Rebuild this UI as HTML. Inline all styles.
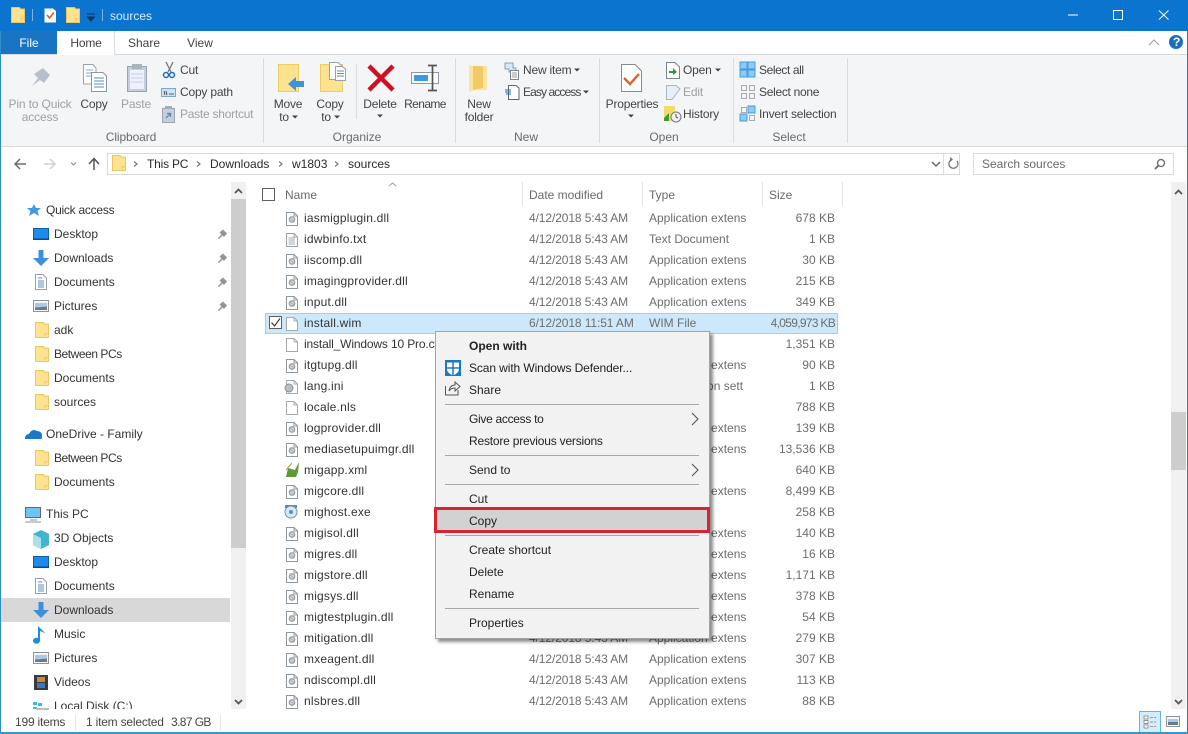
<!DOCTYPE html>
<html><head><meta charset="utf-8"><title>sources</title>
<style>
html,body{margin:0;padding:0;background:#fff}
#w{position:relative;width:1188px;height:734px;overflow:hidden;background:#fff;font:12px/16px "Liberation Sans",sans-serif;color:#2a2a2a}
#w div{position:absolute}
.t{white-space:nowrap}
.c{transform:translateX(-50%);text-align:center}
.g{color:#6a6a6a}
.dis{color:#a0a0a0;letter-spacing:-.15px}
.rb{color:#444;letter-spacing:-.2px}
.b{background:#dcdcdc}
.nv{left:54px;white-space:nowrap;color:#333}
.nh{left:46px;white-space:nowrap;color:#333}
.r{left:0;width:850px;height:21px}
.r span{position:absolute;top:2px;white-space:nowrap}
.n{left:304px;color:#333;letter-spacing:.2px}
.d{left:529px;color:#6d6d6d;letter-spacing:-.1px}
.y{left:649px;color:#6d6d6d}
.s{right:15px;color:#6d6d6d}
.m{left:33px;white-space:nowrap;color:#222}
.sp{left:9px;width:254px;height:1px;background:#a8a8a8}
svg{position:absolute;overflow:visible}
</style></head><body><div id="w">

<!-- title bar -->
<div style="left:0;top:0;width:1188px;height:31px;background:#0b74cf"></div>
<div style="left:0;top:31px;width:1188px;height:24px;background:#fff"></div>
<div style="left:0;top:31px;width:57px;height:23px;background:#1a74c4"></div>
<div style="left:57px;top:31px;width:57px;height:24px;background:#fff;border-right:1px solid #d9dadb"></div>
<div style="left:115px;top:54px;width:1073px;height:1px;background:#d9dadb"></div>
<div style="left:0;top:54px;width:57px;height:1px;background:#d9dadb"></div>
<!-- ribbon -->
<div style="left:0;top:55px;width:1188px;height:91px;background:#f4f5f6"></div>
<div style="left:0;top:146px;width:1188px;height:1px;background:#d9dadb"></div>
<div class="b" style="left:263px;top:58px;width:1px;height:85px"></div>
<div class="b" style="left:455px;top:58px;width:1px;height:85px"></div>
<div class="b" style="left:599px;top:58px;width:1px;height:85px"></div>
<div class="b" style="left:733px;top:58px;width:1px;height:85px"></div>
<div class="b" style="left:847px;top:58px;width:1px;height:85px"></div>
<div class="b" style="left:356px;top:64px;width:1px;height:55px"></div>

<!-- address -->
<div style="left:107px;top:153px;width:851px;height:20px;border:1px solid #d9d9d9"></div>
<div class="b" style="left:943px;top:154px;width:1px;height:20px"></div>
<div style="left:973px;top:153px;width:199px;height:20px;border:1px solid #d9d9d9"></div>

<!-- nav -->
<div style="left:1px;top:598px;width:229px;height:24px;background:#d8d8d8"></div>
<div style="left:231px;top:182px;width:15px;height:527px;background:#f0f0f0"></div>
<div style="left:231px;top:199px;width:15px;height:349px;background:#cdcdcd"></div>
<div style="left:1171px;top:182px;width:15px;height:527px;background:#f0f0f0"></div>
<div style="left:1171px;top:412px;width:15px;height:58px;background:#cdcdcd"></div>

<!-- selected row -->
<div style="left:265px;top:313px;width:571px;height:19px;background:#cde8fb;border:1px solid #9fd0f3"></div>
<!-- view buttons -->
<div style="left:1139px;top:711px;width:20px;height:21px;background:#d4ecfb;border:1px solid #5fb6ea"></div>
<!-- window edges -->
<div style="left:0;top:31px;width:1px;height:703px;background:#2c8fc7"></div>
<div style="left:1187px;top:31px;width:1px;height:703px;background:#2c7f9f"></div>
<div style="left:0;top:732px;width:1188px;height:2px;background:#3a96c8"></div>

<svg width="1188" height="734" style="left:0;top:0" viewBox="0 0 1188 734">
<defs>
<g id="fo"><path d="M.5.5H8.500L9.500 2H13.500V15.500H.5Z" fill="#fde28f" stroke="#e8c765"/><path d="M9.500 15V11H13" fill="#f3cf6a"/></g>
<g id="dl"><path d="M.5.5H8L11.500 4V13.500H.5Z" fill="#fff" stroke="#8f979e"/><path d="M8 .5V4H11.500" fill="none" stroke="#8f979e"/><circle cx="6" cy="7.500" r="2.600" fill="#dfe3e6" stroke="#9aa2a8" stroke-width="1.500"/><path d="M3.500 5L8.500 10" stroke="#a5acb2"/></g>
<g id="bl"><path d="M.5.5H8L11.500 4V13.500H.5Z" fill="#fff" stroke="#a4a9ae"/><path d="M8 .5V4H11.500" fill="none" stroke="#a4a9ae"/></g>
<g id="tx"><path d="M.5.5H8L11.500 4V13.500H.5Z" fill="#fff" stroke="#9aa0a6"/><path d="M8 .5V4H11.500M2.500 5H9M2.500 7H9M2.500 9H9M2.500 11H9" fill="none" stroke="#a5abb0"/></g>
<g id="pn"><path d="M2 10L5.500 6.500L3.500 4.500L7 1.500L11 5.500L8 9L6.500 7.500L3 11Z" fill="#8d949b"/></g>
<g id="dk"><rect x=".5" y=".5" width="15" height="11" fill="#1f8cec" stroke="#0e5fa9"/><rect x="0" y="10.500" width="16" height="1.500" fill="#0b4a86"/></g>
<g id="dn"><path d="M5.500 0H10.500V8H16L8 16L0 8H5.500Z" fill="#3d8fdd"/></g>
<g id="dc"><path d="M.5.5H8L11.500 4V15.500H.5Z" fill="#fff" stroke="#9aa0a6"/><path d="M3 4H7M3 7H9M3 9H9M3 11H9M3 13H9" stroke="#5b8fc0"/></g>
<g id="pc"><rect x=".5" y=".5" width="15" height="11" fill="#f4f6f8" stroke="#8d949b"/><path d="M2 3H14V6.500L2 7.500Z" fill="#a8c9e6"/><path d="M2 7.500L14 6.500V10H2Z" fill="#6d7a86"/></g>
</defs>

<!-- title icons -->
<use href="#fo" x="11" y="7"/><rect x="32" y="9" width="1" height="12" fill="#7fb6e6"/>
<path d="M44.500 8.500H53L56 11V22.500H44.500Z" fill="#fff"/><path d="M47 15L49.500 18L54 12.500" fill="none" stroke="#d9552b" stroke-width="1.500"/>
<use href="#fo" x="66" y="7"/>
<path d="M87 14H95M87.500 17H94.500L91 21Z" fill="#12345c" stroke="#12345c"/><rect x="102" y="9" width="1" height="12" fill="#7fb6e6"/>
<path d="M1068 15H1078M1113.500 10.500H1122.500V19.500H1113.500ZM1159 10.500L1168.500 19.500M1168.500 10.500L1159 19.500" fill="none" stroke="#fff" stroke-width="1"/>
<circle cx="1176" cy="42" r="7" fill="#1b6fb8"/>
<path d="M1149 45L1154 40L1159 45" fill="none" stroke="#9a9a9a"/>

<!-- clipboard -->
<path d="M32 86L38 78L34 74L43 68L50 75L44 83L40 80Z" fill="#b7c0ca"/>
<path d="M83.500 64.500H93L96 68V84H83.500Z" fill="#fff" stroke="#9aa3ab"/><path d="M86 70H93M86 73H93M86 76H93" stroke="#7ea8cc"/>
<path d="M91.500 72.500H103L106.500 76V91.500H91.500Z" fill="#fff" stroke="#8c96a0"/><path d="M94 78H104M94 81H104M94 84H104M94 87H104" stroke="#4f8ec7"/>
<rect x="127.500" y="66.500" width="19" height="25" fill="#c5cfdb" stroke="#98a3af"/><rect x="130" y="70" width="14" height="19" fill="#eef1fb"/><rect x="132" y="64" width="10" height="5" fill="#a9b3bf"/><path d="M131 74H143M131 78H143M131 82H143" stroke="#c5cdee"/>
<path d="M166 62L171 72M173 62L168 72" stroke="#777" stroke-width="1.300"/><circle cx="166" cy="75" r="2.500" fill="none" stroke="#1d6fb5" stroke-width="1.500"/><circle cx="172" cy="75" r="2.500" fill="none" stroke="#1d6fb5" stroke-width="1.500"/>
<rect x="161.500" y="88.500" width="14" height="8" fill="#cfe3f5" stroke="#7ba7cf"/><path d="M164 91L165 95M166 91L167 95M169 94H174" stroke="#333" stroke-width=".8"/>
<rect x="162.500" y="108.500" width="12" height="14" fill="#c3cfdb" stroke="#9aa5b1"/><rect x="165" y="106" width="7" height="3" fill="#a3aeba"/><path d="M166 118L170 114M167 113.500H170.500V117" fill="none" stroke="#4f86b8" stroke-width="1.200"/>
<!-- organize -->
<path d="M278.500 64.500H298.500V91.500H278.500Z" fill="#fde28f" stroke="#f0cd62"/><path d="M288 84L296 77V81H304V87H296V91Z" fill="#3f94d8"/>
<path d="M320.500 64.500H342.500V91.500H320.500Z" fill="#fde28f" stroke="#f0cd62"/><path d="M329.500 62.500H338L342 66V79.500H329.500Z" fill="#fff" stroke="#98a1aa"/><path d="M335.500 66.500H342L345.500 69V80.500H335.500Z" fill="#fff" stroke="#98a1aa"/><path d="M337 71H344M337 73.500H344M337 76H344" stroke="#4f8ec7"/>
<path d="M369 66L393 90M393 66L369 90" stroke="#cf1020" stroke-width="4.500"/>
<rect x="411.500" y="72.500" width="27" height="11" fill="#fff" stroke="#8b98a5"/><rect x="414" y="75" width="14" height="6" fill="#3b9ae0"/><path d="M428 65.500H437M428 90.500H437M432.500 66V90" stroke="#555" stroke-width="1.700"/>
<!-- new -->
<path d="M469 65.500L478 66H487V90H475L469 92Z" fill="#fce3a0"/><path d="M473 66H483V88L473 90Z" fill="#f3cb66"/>
<path d="M505 63H513V68H516V72H509V69H505Z" fill="#d6e7f6" stroke="#728aa0" stroke-width=".8"/><rect x="510.500" y="70.500" width="8" height="9" fill="#fff" stroke="#7d8790"/><path d="M512 73H517M512 75H517M512 77H517" stroke="#999"/>
<path d="M508.500 85.500H516L519 88V99.500H508.500Z" fill="#fff" stroke="#666"/><path d="M505 90H511M505 92H511M506 94H511" stroke="#1b6fb8"/>
<!-- open -->
<path d="M621.500 64.500H635L641.500 71V91.500H621.500Z" fill="#fff" stroke="#8a8a8a"/><path d="M624 78L630 84L639 74" fill="none" stroke="#d9652b" stroke-width="2.400"/>
<path d="M666.500 62.500H675L679.500 67V78.500H666.500Z" fill="#fff" stroke="#7b858e"/><path d="M669 71H673V68L677 72L673 75V73H669Z" fill="#2a9a3a"/>
<path d="M666.500 85.500H676L680 89L672 99.500H666.500Z" fill="#e7eef6" stroke="#a7b6c4"/>
<rect x="664" y="106" width="11" height="15" fill="#f1dd6b"/><path d="M664 118L669 113V121H664Z" fill="#3f9a3a"/><circle cx="676" cy="117" r="5" fill="#eef1f2" stroke="#777"/><path d="M676 114V117L678 118" fill="none" stroke="#555"/>
<!-- select -->
<path d="M740 62H747V69H740ZM748 62H755V69H748ZM740 70H747V77H740ZM748 70H755V77H748Z" fill="#8ecbf3" stroke="#3b9ae0" stroke-width=".9"/>
<path d="M741.500 85.500H746.500V90.500H741.500ZM749.500 85.500H754.500V90.500H749.500ZM741.500 93.500H746.500V98.500H741.500ZM749.500 93.500H754.500V98.500H749.500Z" fill="none" stroke="#aaa"/>
<path d="M741.500 107.500H746.500V112.500H741.500ZM749.500 115.500H754.500V120.500H749.500Z" fill="none" stroke="#aaa"/>
<path d="M748 106H755V113H748ZM740 114H747V121H740Z" fill="#8ecbf3" stroke="#3b9ae0" stroke-width=".9"/>
<!-- ribbon dropdown triangles -->
<path d="M292 115.500H298L295 118.500ZM334 115.500H340L337 118.500ZM377 114.500H383L380 117.500ZM628 114.500H634L631 117.500ZM574 68.500H580L577 71.500ZM583 90.500H589L586 93.500ZM715 68.500H721L718 71.500Z" fill="#444"/>

<!-- address icons -->
<path d="M26 164H15M20 159L15 164L20 169" fill="none" stroke="#6c6c6c" stroke-width="1.500"/>
<path d="M44 164H55M50 159L55 164L50 169" fill="none" stroke="#d0d0d0" stroke-width="1.500"/>
<path d="M71 162.500L73.500 165L76 162.500" fill="none" stroke="#8a8a8a"/>
<path d="M94 170V159M89 164L94 158.500L99 164" fill="none" stroke="#555" stroke-width="1.500"/>
<use href="#fo" x="112" y="155"/>
<path d="M134 161.500L137 164L134 166.500M197 161.500L200 164L197 166.500M279 161.500L282 164L279 166.500M335 161.500L338 164L335 166.500" fill="none" stroke="#7a7a7a" stroke-width="1.200"/>
<path d="M932 162L936 166L940 162" fill="none" stroke="#6c6c6c" stroke-width="1.500"/>
<path d="M957 161A4.500 4.500 0 1 1 952 159.500" fill="none" stroke="#777" stroke-width="1.300"/><path d="M950 157L953 159.500L950 162" fill="#777"/>
<circle cx="1161" cy="163" r="3.500" fill="none" stroke="#666" stroke-width="1.300"/><path d="M1158.500 165.500L1155 169" stroke="#666" stroke-width="1.800"/>

<!-- nav icons -->
<path d="M34 204L36 208H41L37.500 211L39 216L34 213L29 216L30.500 211L27 208H32Z" fill="#3d9ae2"/>
<use href="#dk" x="33" y="228"/><use href="#pn" x="216" y="228"/>
<use href="#dn" x="33" y="250"/><use href="#pn" x="216" y="252"/>
<use href="#dc" x="35" y="274"/><use href="#pn" x="216" y="276"/>
<use href="#pc" x="33" y="300"/><use href="#pn" x="216" y="300"/>
<use href="#fo" x="35" y="322"/><use href="#fo" x="35" y="346"/><use href="#fo" x="35" y="370"/><use href="#fo" x="35" y="394"/>
<path d="M25 439Q25 434 29 434Q32 428 37 431Q42 431 42 436Q42 439 41 439Z" fill="#1a78c8"/>
<use href="#fo" x="35" y="450"/><use href="#fo" x="35" y="474"/>
<rect x="25.500" y="507.500" width="15" height="10" fill="#6ec4f5" stroke="#5a6a78"/><path d="M30 520H37M25 522H41" stroke="#8a949d"/>
<path d="M33 534L41 530L49 534V545L41 549L33 545Z" fill="#3fb5cf"/><path d="M41 538V549L33 545V534Z" fill="#a9e2ee"/>
<use href="#dk" x="33" y="556"/><use href="#dc" x="35" y="578"/><use href="#dn" x="33" y="602"/>
<path d="M40 626V641A3.500 3 0 1 1 38 638V626Q42 630 46 634Q43 632 40 631Z" fill="#1f8cdc"/>
<use href="#pc" x="33" y="652"/>
<rect x="34" y="675" width="14" height="15" fill="#3a3a3a"/><rect x="37" y="677" width="8" height="5" fill="#c68a3c"/><rect x="37" y="683" width="8" height="5" fill="#3a78c0"/>
<path d="M33 702H37V705H33ZM33 707H37V709H33ZM38 703H42V706H38Z" fill="#3fb5e0"/><path d="M36 708H49V710H36Z" fill="#b8bdc2"/>
<!-- scroll arrows -->
<path d="M235 193L238.500 189.500L242 193M1175 194L1178.500 190.500L1182 194M235 700L238.500 703.500L242 700M1175 700L1178.500 703.500L1182 700" fill="none" stroke="#555" stroke-width="1.700"/>
<!-- header -->
<rect x="262.500" y="188.500" width="12" height="12" fill="#fff" stroke="#5f5f5f"/>
<path d="M389 186L392.500 183L396 186" fill="none" stroke="#9a9a9a"/>
<path d="M522.500 182V206M642.500 182V206M762.500 182V206M842.500 182V206" stroke="#e5e5e5"/>
<rect x="269.500" y="316.500" width="12" height="12" fill="#fff" stroke="#5f5f5f"/><path d="M271.500 322.500L274.500 326L280 318.500" fill="none" stroke="#333" stroke-width="1.100"/>

<!-- file icons -->
<use href="#dl" x="286" y="212"/><use href="#tx" x="286" y="233"/><use href="#dl" x="286" y="254"/><use href="#dl" x="286" y="275"/><use href="#dl" x="286" y="296"/>
<use href="#bl" x="286" y="317"/><use href="#bl" x="286" y="338"/><use href="#dl" x="286" y="359"/>
<use href="#bl" x="286" y="380"/><circle cx="289" cy="388" r="4" fill="#b9bec3" stroke="#8a9096"/>
<use href="#bl" x="286" y="401"/><use href="#dl" x="286" y="422"/><use href="#dl" x="286" y="443"/>
<path d="M286 477L288 468L295 470L299 462L298 472L296 477Z" fill="#5f9a3a"/><path d="M286 470L292 463" stroke="#b0a040"/>
<use href="#dl" x="286" y="485"/>
<rect x="285" y="505" width="12" height="3" fill="#4c8fd0"/><circle cx="291" cy="512" r="6" fill="#dde6ee" stroke="#6f8fae"/><circle cx="291" cy="512" r="2" fill="#4c8fd0"/>
<use href="#dl" x="286" y="527"/><use href="#dl" x="286" y="548"/><use href="#dl" x="286" y="569"/><use href="#dl" x="286" y="590"/><use href="#dl" x="286" y="611"/><use href="#dl" x="286" y="632"/><use href="#dl" x="286" y="653"/><use href="#dl" x="286" y="674"/><use href="#dl" x="286" y="695"/>
<!-- status -->
<path d="M75.500 714V730M220.500 714V730" stroke="#e5e5e5"/>
<path d="M1144 716H1148V719H1144ZM1144 720.500H1148V723.500H1144ZM1144 725H1148V728H1144Z" fill="#fff" stroke="#777" stroke-width=".7"/><path d="M1150 717.500H1156M1150 722H1156M1150 726.500H1156" stroke="#999" stroke-dasharray="3 1"/>
<rect x="1166.500" y="716.500" width="13" height="10" fill="#f4f6f8" stroke="#8d949b"/><path d="M1168 719H1178V722H1168Z" fill="#a8c9e6"/><path d="M1168 722H1178V725H1168Z" fill="#6d7a86"/>
</svg>

<!-- title / tabs text -->
<div class="t" style="left:110px;top:8px;color:#d9ecfb">sources</div>
<div class="t" style="left:1173px;top:34px;color:#fff;font-weight:bold">?</div>
<div class="t c" style="left:29px;top:35px;color:#fff">File</div>
<div class="t c" style="left:86px;top:35px;color:#444;letter-spacing:-.2px">Home</div>
<div class="t c" style="left:144px;top:35px;color:#444">Share</div>
<div class="t c" style="left:200px;top:35px;color:#444">View</div>

<!-- ribbon text -->
<div class="t c dis" style="left:40px;top:98px;line-height:13px">Pin to Quick<br>access</div>
<div class="t c rb" style="left:94px;top:98px;line-height:13px">Copy</div>
<div class="t c dis" style="left:136px;top:98px;line-height:13px">Paste</div>
<div class="t rb" style="left:180px;top:62px">Cut</div>
<div class="t rb" style="left:180px;top:84px">Copy path</div>
<div class="t dis" style="left:180px;top:106px;letter-spacing:-.25px">Paste shortcut</div>
<div class="t c g" style="left:131px;top:129px;letter-spacing:-.1px">Clipboard</div>
<div class="t c rb" style="left:288px;top:98px;line-height:13px">Move<br><span style="position:relative;left:-4px">to</span></div>
<div class="t c rb" style="left:330px;top:98px;line-height:13px">Copy<br><span style="position:relative;left:-4px">to</span></div>
<div class="t c rb" style="left:380px;top:98px;line-height:13px">Delete</div>
<div class="t c rb" style="left:425px;top:98px;line-height:13px;letter-spacing:-.6px">Rename</div>
<div class="t c g" style="left:357px;top:129px">Organize</div>
<div class="t c rb" style="left:479px;top:98px;line-height:13px">New<br>folder</div>
<div class="t rb" style="left:523px;top:62px">New item</div>
<div class="t rb" style="left:523px;top:84px;letter-spacing:-.9px">Easy access</div>
<div class="t c g" style="left:526px;top:129px">New</div>
<div class="t c rb" style="left:632px;top:98px;line-height:13px">Properties</div>
<div class="t rb" style="left:683px;top:62px">Open</div>
<div class="t dis" style="left:683px;top:84px">Edit</div>
<div class="t rb" style="left:683px;top:106px">History</div>
<div class="t c g" style="left:664px;top:129px">Open</div>
<div class="t rb" style="left:759px;top:62px;letter-spacing:-.4px">Select all</div>
<div class="t rb" style="left:759px;top:84px;letter-spacing:-.3px">Select none</div>
<div class="t rb" style="left:759px;top:106px">Invert selection</div>
<div class="t c g" style="left:789px;top:129px">Select</div>

<!-- address text -->
<div class="t" style="left:147px;top:156px;letter-spacing:-.2px">This PC</div>
<div class="t" style="left:210px;top:156px">Downloads</div>
<div class="t" style="left:292px;top:156px">w1803</div>
<div class="t" style="left:348px;top:156px">sources</div>
<div class="t g" style="left:982px;top:156px">Search sources</div>

<!-- nav text -->
<div class="nh" style="top:202px;letter-spacing:-.25px">Quick access</div>
<div class="nv" style="top:226px">Desktop</div>
<div class="nv" style="top:250px">Downloads</div>
<div class="nv" style="top:274px">Documents</div>
<div class="nv" style="top:298px">Pictures</div>
<div class="nv" style="top:322px">adk</div>
<div class="nv" style="top:346px;letter-spacing:-.45px">Between PCs</div>
<div class="nv" style="top:370px">Documents</div>
<div class="nv" style="top:394px">sources</div>
<div class="nh" style="top:426px">OneDrive - Family</div>
<div class="nv" style="top:450px;letter-spacing:-.45px">Between PCs</div>
<div class="nv" style="top:474px">Documents</div>
<div class="nh" style="top:506px">This PC</div>
<div class="nv" style="top:530px">3D Objects</div>
<div class="nv" style="top:554px">Desktop</div>
<div class="nv" style="top:578px">Documents</div>
<div class="nv" style="top:602px">Downloads</div>
<div class="nv" style="top:626px">Music</div>
<div class="nv" style="top:650px">Pictures</div>
<div class="nv" style="top:674px">Videos</div>
<div class="nv" style="top:698px;height:11px;overflow:hidden">Local Disk (C:)</div>

<!-- header text -->
<div class="t g" style="left:285px;top:187px">Name</div>
<div class="t g" style="left:529px;top:187px">Date modified</div>
<div class="t g" style="left:649px;top:187px">Type</div>
<div class="t g" style="left:769px;top:187px">Size</div>

<!-- rows -->
<div class="r" style="top:208px"><span class="n">iasmigplugin.dll</span><span class="d">4/12/2018 5:43 AM</span><span class="y">Application extens</span><span class="s">678 KB</span></div>
<div class="r" style="top:229px"><span class="n">idwbinfo.txt</span><span class="d">4/12/2018 5:43 AM</span><span class="y">Text Document</span><span class="s">1 KB</span></div>
<div class="r" style="top:250px"><span class="n">iiscomp.dll</span><span class="d">4/12/2018 5:43 AM</span><span class="y">Application extens</span><span class="s">30 KB</span></div>
<div class="r" style="top:271px"><span class="n">imagingprovider.dll</span><span class="d">4/12/2018 5:43 AM</span><span class="y">Application extens</span><span class="s">215 KB</span></div>
<div class="r" style="top:292px"><span class="n">input.dll</span><span class="d">4/12/2018 5:43 AM</span><span class="y">Application extens</span><span class="s">349 KB</span></div>
<div class="r" style="top:313px"><span class="n">install.wim</span><span class="d">6/12/2018 11:51 AM</span><span class="y">WIM File</span><span class="s" style="letter-spacing:-.7px">4,059,973 KB</span></div>
<div class="r" style="top:334px"><span class="n" style="letter-spacing:-.15px">install_Windows 10 Pro.cfg</span><span class="s">1,351 KB</span></div>
<div class="r" style="top:355px"><span class="n">itgtupg.dll</span><span class="y">Application extens</span><span class="s">90 KB</span></div>
<div class="r" style="top:376px"><span class="n">lang.ini</span><span class="y">Configuration sett</span><span class="s">1 KB</span></div>
<div class="r" style="top:397px"><span class="n">locale.nls</span><span class="s">788 KB</span></div>
<div class="r" style="top:418px"><span class="n">logprovider.dll</span><span class="y">Application extens</span><span class="s">139 KB</span></div>
<div class="r" style="top:439px"><span class="n">mediasetupuimgr.dll</span><span class="y">Application extens</span><span class="s">13,536 KB</span></div>
<div class="r" style="top:460px"><span class="n">migapp.xml</span><span class="s">640 KB</span></div>
<div class="r" style="top:481px"><span class="n">migcore.dll</span><span class="y">Application extens</span><span class="s">8,499 KB</span></div>
<div class="r" style="top:502px"><span class="n">mighost.exe</span><span class="s">258 KB</span></div>
<div class="r" style="top:523px"><span class="n">migisol.dll</span><span class="y">Application extens</span><span class="s">140 KB</span></div>
<div class="r" style="top:544px"><span class="n">migres.dll</span><span class="y">Application extens</span><span class="s">16 KB</span></div>
<div class="r" style="top:565px"><span class="n">migstore.dll</span><span class="y">Application extens</span><span class="s">1,171 KB</span></div>
<div class="r" style="top:586px"><span class="n">migsys.dll</span><span class="y">Application extens</span><span class="s">378 KB</span></div>
<div class="r" style="top:607px"><span class="n">migtestplugin.dll</span><span class="y">Application extens</span><span class="s">54 KB</span></div>
<div class="r" style="top:628px"><span class="n">mitigation.dll</span><span class="d">4/12/2018 5:43 AM</span><span class="y">Application extens</span><span class="s">279 KB</span></div>
<div class="r" style="top:649px"><span class="n">mxeagent.dll</span><span class="d">4/12/2018 5:43 AM</span><span class="y">Application extens</span><span class="s">307 KB</span></div>
<div class="r" style="top:670px"><span class="n">ndiscompl.dll</span><span class="d">4/12/2018 5:43 AM</span><span class="y">Application extens</span><span class="s">113 KB</span></div>
<div class="r" style="top:691px"><span class="n">nlsbres.dll</span><span class="d">4/12/2018 5:43 AM</span><span class="y">Application extens</span><span class="s">88 KB</span></div>

<!-- status text -->
<div class="t rb" style="left:15px;top:714px">199 items</div>
<div class="t rb" style="left:86px;top:714px">1 item selected</div>
<div class="t rb" style="left:171px;top:714px;letter-spacing:-.6px">3.87 GB</div>

<!-- context menu -->
<div style="left:435px;top:331px;width:273px;height:306px;background:#f2f2f2;border:1px solid #a4a4a4;box-shadow:3px 3px 3px rgba(0,0,0,.45)">
  <div style="left:-2px;top:175px;width:276px;height:26px;box-sizing:border-box;background:#d2d2d2;border:3px solid #db2232"></div>
  <div class="m" style="top:6px;font-weight:bold">Open with</div>
  <div class="m" style="top:28px;letter-spacing:-.1px">Scan with Windows Defender...</div>
  <div class="m" style="top:50px">Share</div>
  <div class="sp" style="top:72px"></div>
  <div class="m" style="top:79px;letter-spacing:-.3px">Give access to</div>
  <div class="m" style="top:101px;letter-spacing:-.2px">Restore previous versions</div>
  <div class="sp" style="top:123px"></div>
  <div class="m" style="top:130px">Send to</div>
  <div class="sp" style="top:152px"></div>
  <div class="m" style="top:159px">Cut</div>
  <div class="m" style="top:181px">Copy</div>
  <div class="sp" style="top:203px"></div>
  <div class="m" style="top:210px">Create shortcut</div>
  <div class="m" style="top:232px">Delete</div>
  <div class="m" style="top:254px">Rename</div>
  <div class="sp" style="top:276px"></div>
  <div class="m" style="top:283px">Properties</div>
  <svg width="273" height="306" style="left:0;top:0" viewBox="0 0 273 306">
    <rect x="9" y="28" width="16" height="16" fill="#1a78c8"/>
    <path d="M11 30.500H23V37Q23 41 17 43.500Q11 41 11 37Z" fill="#fff"/><path d="M17 30V44M10.500 36H23.500" stroke="#1a78c8" stroke-width="1.500"/>
    <path d="M9.500 54V63H22V58M13 59Q14 53 19 53V50L24 54.500L19 59V56Q15 56 13 59Z" fill="none" stroke="#555"/>
    <path d="M256 81L262 87L256 93M256 132L262 138L256 144" fill="none" stroke="#555" stroke-width="1.100"/>
  </svg>
</div>
</div></body></html>
